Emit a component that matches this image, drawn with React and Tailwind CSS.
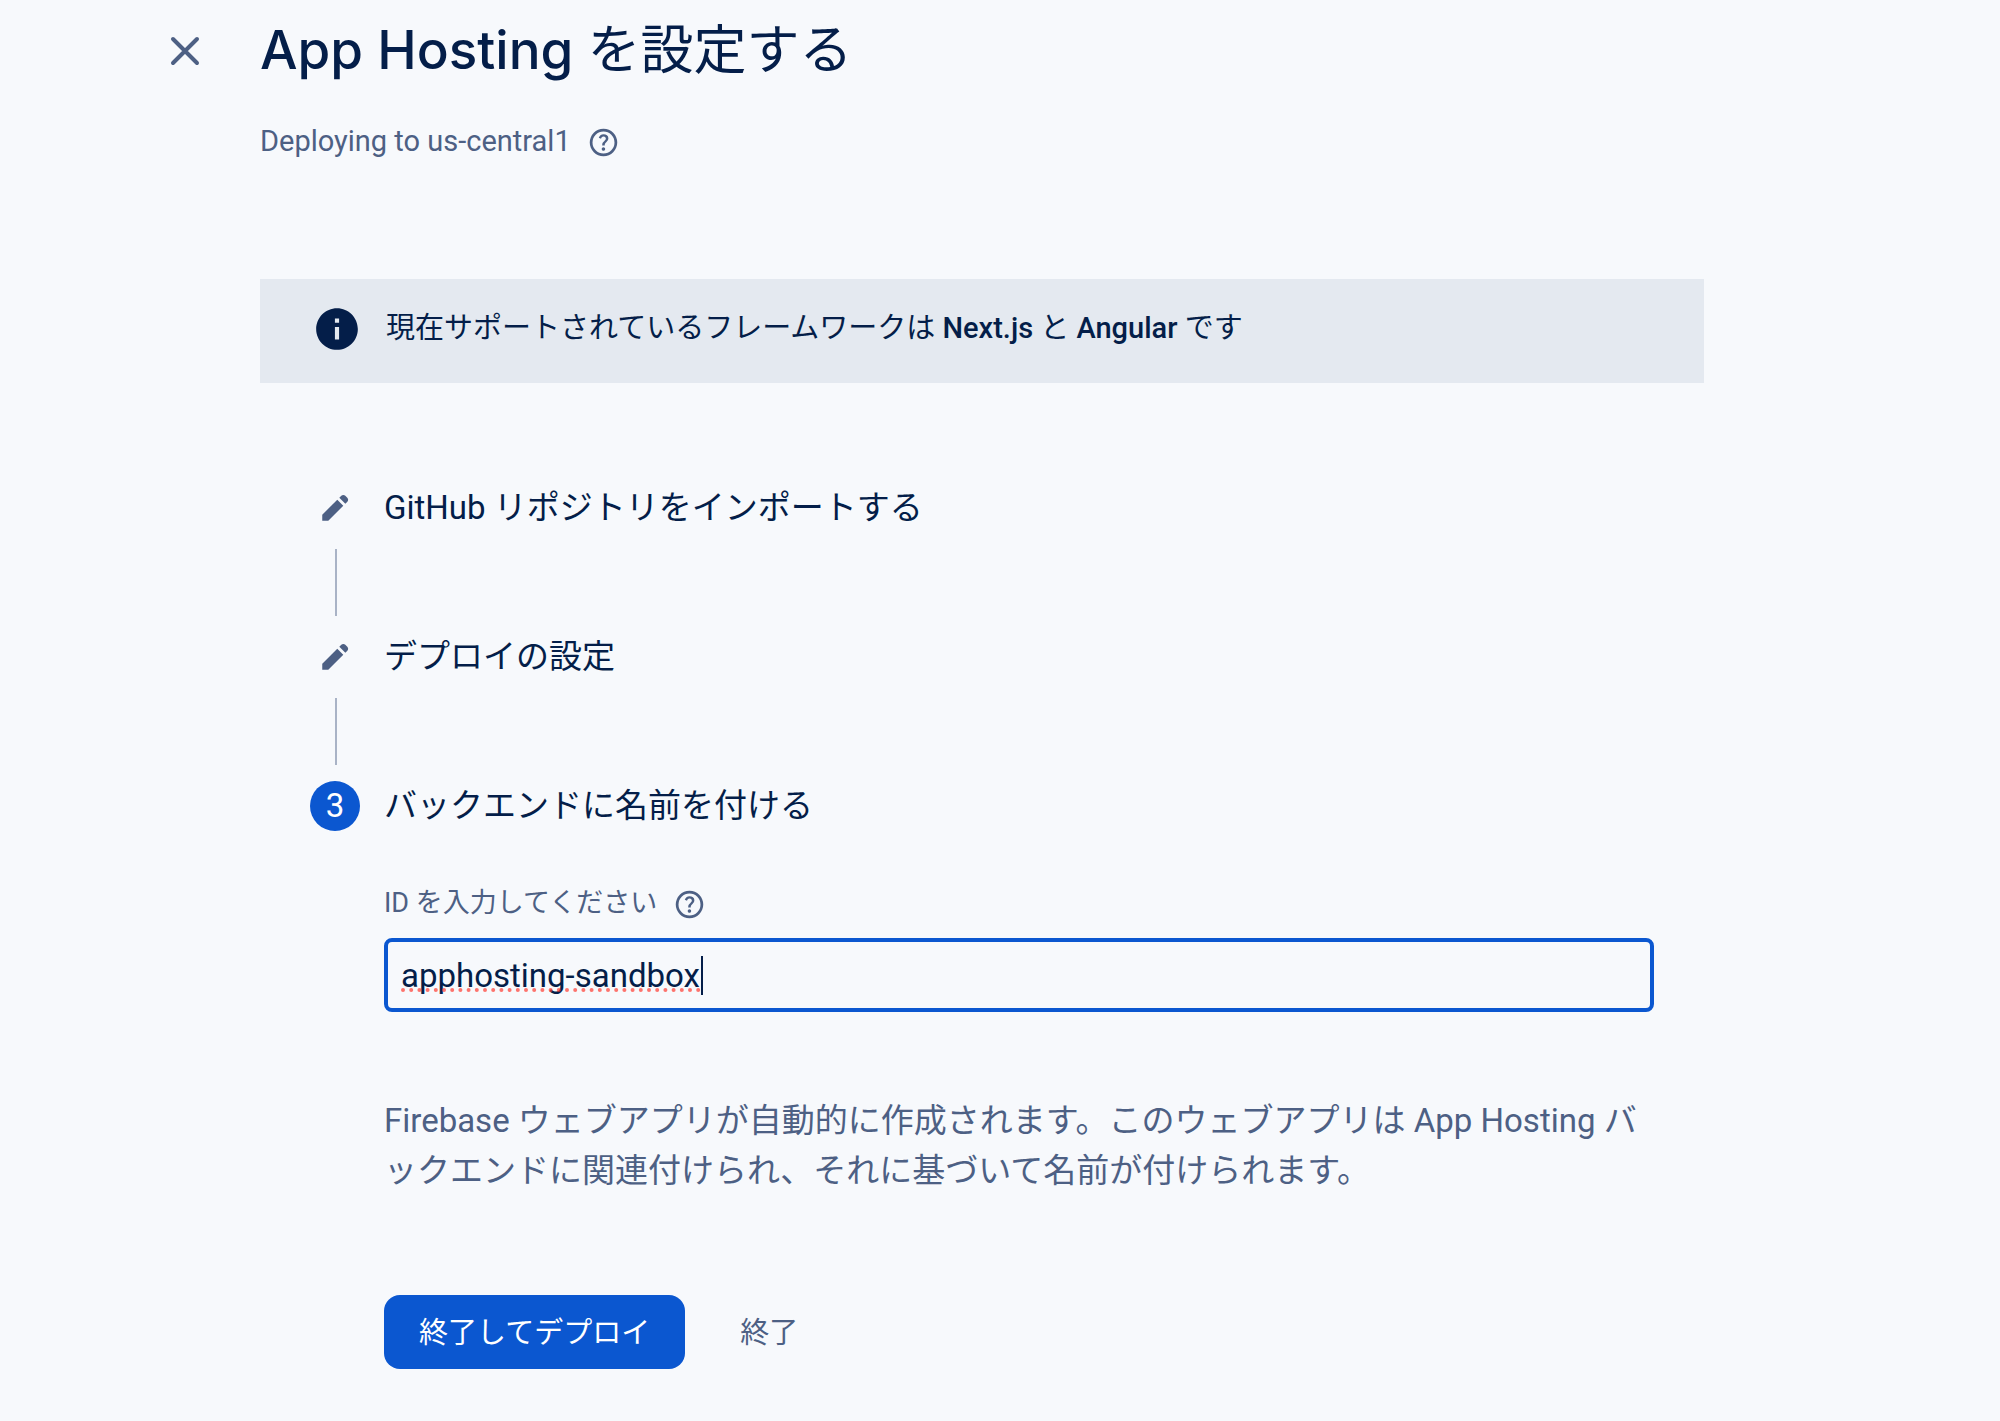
import React, { useState } from "react";
import { MdInfo } from "react-icons/md";

const doneSteps = ["GitHub リポジトリをインポートする", "デプロイの設定"];

const CloseIcon = () => (
  <svg width="50" height="50" viewBox="0 0 50 50" aria-hidden="true">
    <path
      d="M13 13l24 24M37 13L13 37"
      stroke="currentColor"
      strokeWidth="4"
      strokeLinecap="round"
    />
  </svg>
);

const EditIcon = () => (
  <svg width="34" height="34" viewBox="0 0 24 24" fill="currentColor" aria-hidden="true">
    <path d="M19.3 8.925l-4.25-4.2 1.4-1.4q.575-.575 1.413-.575t1.412.575l1.4 1.4q.575.575.6 1.388t-.55 1.387L19.3 8.925ZM17.85 10.4L7.25 21H3v-4.25l10.6-10.6 4.25 4.25Z" />
  </svg>
);

const HelpIcon = () => (
  <svg width="33" height="33" viewBox="0 0 24 24" fill="currentColor" aria-hidden="true">
    <path d="M11.95 18q.525 0 .888-.363t.362-.887q0-.525-.362-.888t-.888-.362q-.525 0-.887.363t-.363.887q0 .525.362.888t.888.362Zm-.9-3.85h1.85q0-.825.188-1.3t1.062-1.3q.65-.65 1.025-1.238T15.55 8.9q0-1.4-1.025-2.15T12.1 6q-1.425 0-2.313.75T8.55 8.55l1.65.65q.125-.45.563-.975T12.1 7.7q.8 0 1.2.438t.4.962q0 .5-.3.938t-.75.812q-1.1.975-1.35 1.475t-.25 1.825ZM12 22q-2.075 0-3.9-.788t-3.175-2.137q-1.35-1.35-2.137-3.175T2 12q0-2.075.788-3.9t2.137-3.175q1.35-1.35 3.175-2.137T12 2q2.075 0 3.9.788t3.175 2.137q1.35 1.35 2.138 3.175T22 12q0 2.075-.788 3.9t-2.137 3.175q-1.35 1.35-3.175 2.138T12 22Zm0-2q3.35 0 5.675-2.325T20 12q0-3.35-2.325-5.675T12 4Q8.65 4 6.325 6.325T4 12q0 3.35 2.325 5.675T12 20Z" />
  </svg>
);

const DoneStep = ({ title }) => (
  <li>
    <div className="flex h-[50px] items-center gap-6">
      <span className="flex w-[50px] justify-center text-[#4d6084]">
        <EditIcon />
      </span>
      <h2 className="text-[33px] leading-[50px]">{title}</h2>
    </div>
    <div className="my-4 ml-[25px] h-[67px] w-[2px] bg-[#a9b3c6]" />
  </li>
);

const HelpButton = ({ label }) => (
  <button type="button" aria-label={label} className="pt-[2px] text-[#4d6084]">
    <HelpIcon />
  </button>
);

const App = () => {
  const [backendId, setBackendId] = useState("apphosting-sandbox");

  return (
    <div
      lang="ja"
      className="min-h-screen bg-[#f7f9fc] pb-[51px] pl-[160px] pr-[296px] font-['Roboto','Noto_Sans_CJK_JP',sans-serif] text-[#041e49]"
    >
      <header className="flex gap-[50px] pt-[10px]">
        <button type="button" aria-label="閉じる" className="h-[82px] text-[#4d6084]">
          <CloseIcon />
        </button>
        <div>
          <h1 className="font-['Inter','Noto_Sans_CJK_JP',sans-serif] text-[53px] font-medium leading-[80px]">
            App Hosting <span className="font-normal">を設定する</span>
          </h1>
          <div className="mt-[30px] flex items-center gap-4 text-[#4d6084]">
            <p className="text-[29px] leading-[42px]">Deploying to us-central1</p>
            <HelpButton label="リージョンのヘルプ" />
          </div>
        </div>
      </header>

      <main className="ml-[100px] mt-[117px]">
        {/* Framework notice */}
        <div className="flex h-[104px] items-start gap-6 bg-[#e4e9f0] pl-[52px] pt-[25px]">
          <MdInfo size={50} />
          <p className="text-[29px] leading-[48px]">
            現在サポートされているフレームワークは <strong className="font-medium">Next.js</strong> と{" "}
            <strong className="font-medium">Angular</strong> です
          </p>
        </div>

        <ol className="pl-[50px] pr-[50px] pt-[100px]">
          {doneSteps.map((title) => (
            <DoneStep key={title} title={title} />
          ))}

          {/* Current step */}
          <li>
            <div className="flex h-[50px] items-center gap-6">
              <span className="flex h-[50px] w-[50px] items-center justify-center rounded-full bg-[#0b57d0] text-[33px] text-white">
                3
              </span>
              <h2 className="text-[33px] leading-[50px]">バックエンドに名前を付ける</h2>
            </div>

            <form onSubmit={(e) => e.preventDefault()} className="ml-[74px]">
              <div className="mt-[52px] flex items-center gap-4 text-[#4d6084]">
                <label htmlFor="backendId" className="text-[27px] leading-[40px]">
                  ID を入力してください
                </label>
                <HelpButton label="ID のヘルプ" />
              </div>

              <div className="relative mt-[15px]">
                <input
                  id="backendId"
                  type="text"
                  value={backendId}
                  onChange={(e) => setBackendId(e.target.value)}
                  className="h-[74px] w-full rounded-lg border-4 border-[#0b57d0] bg-transparent px-[13px] text-[33px] outline-none"
                />
                {/* Spelling underline and caret */}
                <svg
                  className="pointer-events-none absolute left-4 top-4"
                  width="304"
                  height="42"
                  aria-hidden="true"
                >
                  <line
                    x1="3"
                    y1="36"
                    x2="300"
                    y2="36"
                    stroke="#ff3b30"
                    strokeOpacity="0.7"
                    strokeWidth="4"
                    strokeLinecap="round"
                    strokeDasharray="0 8.2"
                  />
                  <rect x="301" y="2" width="2" height="39" fill="#041e49" />
                </svg>
              </div>

              <p className="mt-[84px] break-all text-[33px] leading-[50px] text-[#4d6084]">
                Firebase ウェブアプリが自動的に作成されます。このウェブアプリは App Hosting バックエンドに関連付けられ、それに基づいて名前が付けられます。
              </p>

              <div className="mt-[99px] flex gap-5 text-[29px]">
                <button type="submit" className="h-[74px] rounded-2xl bg-[#0b57d0] px-[35px] pt-1 text-white">
                  終了してデプロイ
                </button>
                <button type="button" className="h-[74px] px-[35px] pt-1 text-[#4d6084]">
                  終了
                </button>
              </div>
            </form>
          </li>
        </ol>
      </main>
    </div>
  );
};

export default App;
